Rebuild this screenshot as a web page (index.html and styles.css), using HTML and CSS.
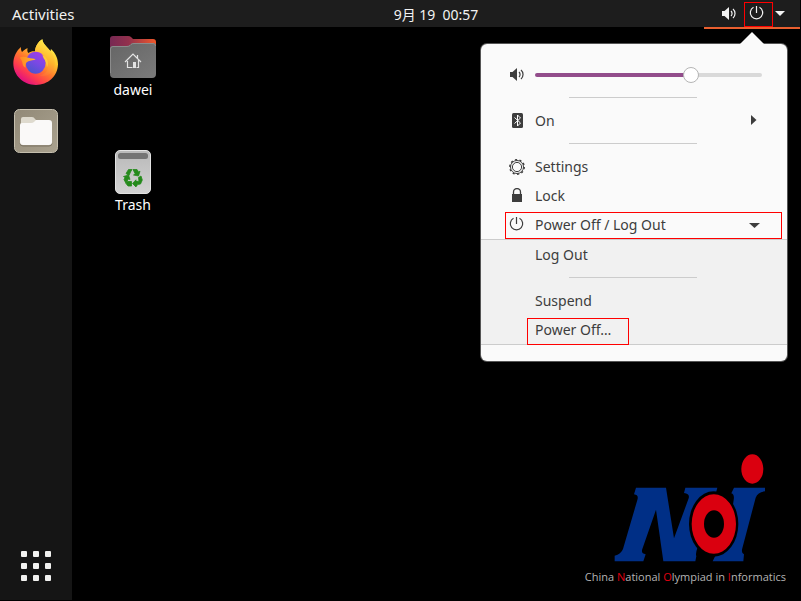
FILE: index.html
```html
<!DOCTYPE html>
<html lang="en">
<head>
<meta charset="utf-8">
<title>Desktop</title>
<link rel="stylesheet" href="styles.css">
</head>
<body>
<svg class="defs" aria-hidden="true">
  <symbol id="volume" viewBox="0 0 16 16">
    <path d="M1 5h2.500L8 1v13l-4.500-4H1z" fill="currentColor"/>
    <path d="M10 5a3.500 3.500 0 0 1 0 5M12 3a6 6 0 0 1 0 9" fill="none" stroke="currentColor" stroke-width="1.200"/>
  </symbol>
  <symbol id="power" viewBox="0 0 16 16">
    <path d="M7.500 0v7M4.500 1.300a6.200 6.200 0 1 0 6 0" fill="none" stroke="currentColor" stroke-width="1.200"/>
  </symbol>
</svg>
<header class="topbar">
  <button class="activities" type="button">Activities</button>
  <time class="clock">9月 19&nbsp; 00:57</time>
  <button class="status" type="button" aria-label="System menu">
    <svg class="icon"><use href="#volume"/></svg>
    <span class="status-power"><svg class="icon"><use href="#power"/></svg></span>
    <svg class="status-arrow" viewBox="0 0 10 5"><path d="M0 0h10L5 5z" fill="currentColor"/></svg>
  </button>
</header>
<main class="screen">
  <nav class="dock" aria-label="Dock">
    <button type="button" class="launcher" aria-label="Firefox">
      <svg class="firefox" viewBox="16 13 138 138">
        <defs>
          <linearGradient id="flame" x1=".85" y1=".1" x2=".25" y2=".95">
            <stop offset="0" stop-color="#fff44f"/><stop offset=".3" stop-color="#ffc42d"/><stop offset=".55" stop-color="#ff7a2c"/><stop offset=".78" stop-color="#ff3d4d"/><stop offset="1" stop-color="#e00f83"/>
          </linearGradient>
          <linearGradient id="tail" x1=".7" y1="0" x2=".4" y2="1">
            <stop offset="0" stop-color="#fff44f"/><stop offset=".55" stop-color="#ffb52d"/><stop offset="1" stop-color="#ff6a36"/>
          </linearGradient>
          <linearGradient id="globe" x1=".8" y1="0" x2=".3" y2="1">
            <stop offset="0" stop-color="#a83be6"/><stop offset=".5" stop-color="#7a48e4"/><stop offset="1" stop-color="#4a55cc"/>
          </linearGradient>
          <linearGradient id="fox" x1="0" y1="0" x2="1" y2="0">
            <stop offset="0" stop-color="#ff8a22"/><stop offset="1" stop-color="#ffb52e"/>
          </linearGradient>
        </defs>
        <path d="M40 37C39 44 41 48 43 52C49 47 53 43 60 41C58 48 59 52 62 55C69 50 75 49 82 50C83 34 92 21 104 14C105 26 116 36 128 50L130 43C145 57 151 73 151 89C150 126 120 151 85 151C46 151 17 122 17 86C17 67 27 47 40 37Z" fill="url(#flame)"/>
        <path d="M82 52C83 34 92 21 104 14C105 28 119 36 130 52C143 68 146 91 134 108C124 123 110 126 97 123C116 117 124 105 121 91C118 78 114 73 104 65C97 60 91 56 82 52Z" fill="url(#tail)"/>
        <ellipse cx="84" cy="84" rx="30" ry="33" fill="url(#globe)"/>
        <path d="M36 69C43 64 53 67 62 69C70 72 79 70 84 74C78 78 69 77 62 80C54 83 52 90 54 99C49 97 46 93 45 88C44 80 41 74 36 69Z" fill="url(#fox)"/>
        <path d="M104 62C119 68 125 84 118 98C117 89 114 79 108 71Z" fill="#ffc93a"/>
      </svg>
    </button>
    <button type="button" class="launcher" aria-label="Files">
      <svg class="files" viewBox="0 0 44 44">
        <defs><linearGradient id="tan" x1="0" y1="0" x2="1" y2="1"><stop offset="0" stop-color="#918977"/><stop offset="1" stop-color="#aaa28f"/></linearGradient></defs>
        <rect x=".5" y=".5" width="43" height="43" rx="5" fill="url(#tan)" stroke="#c5bfae"/>
        <path d="M7 35V10q0-2 2-2h9q2 0 3 2l2 2h12v10H7z" fill="#dedace"/>
        <path d="M6 34q0 3 3 3h26q3 0 3-3" fill="none" stroke="#7c7564"/>
        <path d="M6 16q0-2 2-2h9q2 0 3-1l2-2h13q3 0 3 3v19q0 3-3 3H9q-3 0-3-3z" fill="#faf9f8"/>
      </svg>
    </button>
    <button type="button" class="launcher apps" aria-label="Show applications">
      <svg class="apps-icon" viewBox="0 0 30 30" fill="#f2f2f0">
        <rect width="6" height="6" rx="1"/><rect x="12" width="6" height="6" rx="1"/><rect x="24" width="6" height="6" rx="1"/>
        <rect y="12" width="6" height="6" rx="1"/><rect x="12" y="12" width="6" height="6" rx="1"/><rect x="24" y="12" width="6" height="6" rx="1"/>
        <rect y="24" width="6" height="6" rx="1"/><rect x="12" y="24" width="6" height="6" rx="1"/><rect x="24" y="24" width="6" height="6" rx="1"/>
      </svg>
    </button>
  </nav>
  <section class="desktop" aria-label="Desktop">
    <div class="shortcuts">
      <a class="shortcut" href="#home">
        <svg viewBox="0 0 48 44">
          <defs>
            <linearGradient id="back"><stop offset="0" stop-color="#772953"/><stop offset=".4" stop-color="#92304d"/><stop offset="1" stop-color="#f0582a"/></linearGradient>
            <linearGradient id="front" x1="0" y1="0" x2="1" y2="1"><stop offset="0" stop-color="#656565"/><stop offset="1" stop-color="#7b7b7b"/></linearGradient>
          </defs>
          <path d="M1 20V4q0-3 3-3h15q2 0 3 1l2 2h20q3 0 3 3v13z" fill="url(#back)"/>
          <path d="M1 14q0-3 3-3h14q2 0 3-1l1-1q1-1 3-1h19q3 0 3 3v28q0 4-4 4H5q-4 0-4-4z" fill="url(#front)"/>
          <path d="M1.500 38V14q0-2.500 2.500-2.500h14q2 0 3-1l1-1q1-1 3-1h19q2.500 0 2.500 2.500" fill="none" stroke="#8b8b8b"/>
          <path d="M16 27l8-8 8 8M18.500 26v6.500h5M29.500 25v7.500h-2M28.500 20v3" fill="none" stroke="#e4e4e4" stroke-width="1.200"/>
          <path d="M24 27h3v6h-3z" fill="#e4e4e4"/>
        </svg>
        <span>dawei</span>
      </a>
      <a class="shortcut" href="#trash">
        <svg viewBox="0 0 48 44">
          <defs><linearGradient id="can" x1="0" y1="0" x2="0" y2="1"><stop offset="0" stop-color="#b9b9b9"/><stop offset="1" stop-color="#d2d2d2"/></linearGradient></defs>
          <rect x="6.500" y=".5" width="35" height="43" rx="4.500" fill="url(#can)" stroke="#e2e2e2"/>
          <rect x="9" y="3" width="30" height="6" rx="2.500" fill="#747474"/>
          <g fill="#258a1c" stroke="#258a1c" stroke-width=".8">
            <path d="M17 23.500L19.500 19.500H23L21.500 22L20 25.500Z"/>
            <path d="M24 19.500H28L29.500 22L31 21.200L29.500 26L24.500 25L26.300 24Z"/>
            <path d="M29.500 27.500L32 26L33.300 30L31.500 34L28.500 34.500L27.500 31.500L30 31.200Z"/>
            <path d="M23.500 33.500L27 29.800V31.500H28V36H27V37Z"/>
            <path d="M18.500 31.500H22.500V36H19L17 33.500Z"/>
            <path d="M14.500 26.500L19.500 25L21 29.500L19.300 29L17 33.200L15 29.700L16 27.500Z"/>
          </g>
        </svg>
        <span>Trash</span>
      </a>
    </div>
    <figure class="brand">
      <svg viewBox="27 27 591 324" role="img" aria-label="NOI">
        <g fill="#002f86">
          <path d="M168 128H258L282 280L326 160Q330 146 312 144L316 128H412L408 143Q400 144 397 155L352 310Q346 325 349 334L346 349H250L228 194L187 312Q182 326 197 328L190 349H104V332Q123 328 129 312L172 165Q177 150 162 148Z"/>
          <path d="M462 128H555V139Q534 141 527 158L487 310Q483 324 492 328L490 349H398L406 332L440 310L461 165Q464 148 454 145Z"/>
        </g>
        <ellipse cx="401" cy="237" rx="74" ry="98" fill="#000"/>
        <path d="M335 237a66.500 89 0 1 0 133 0a66.500 89 0 1 0-133 0zM372 237a30 41 0 1 1 60 0a30 41 0 1 1-60 0z" fill="#da000f" fill-rule="evenodd"/>
        <ellipse cx="517" cy="72" rx="33" ry="44" fill="#da000f"/>
      </svg>
      <figcaption>China <b>N</b>ational <b>O</b>lympiad in <b>I</b>nformatics</figcaption>
    </figure>
  </section>
</main>
<aside class="menu" aria-label="System menu">
  <div class="row">
    <svg class="icon"><use href="#volume"/></svg>
    <input class="slider" type="range" min="0" max="100" value="70" aria-label="Volume">
  </div>
  <hr>
  <button class="row" type="button">
    <svg class="icon" viewBox="0 0 16 16"><rect x="3" width="11" height="15" rx="1.500" fill="currentColor"/><path d="M5.500 4.500l6 5.500-3 3v-11l3 3-6 5.500" fill="none" stroke="#fff"/></svg>
    <span class="label">On</span>
    <svg class="icon" viewBox="0 0 16 16"><path d="M5 2v10L10.500 7z" fill="currentColor"/></svg>
  </button>
  <hr>
  <button class="row" type="button">
    <svg class="icon" viewBox="0 0 16 16" fill="none" stroke="currentColor"><circle cx="8" cy="8" r="4.600"/><circle cx="8" cy="8" r="6.500"/><circle cx="8" cy="8" r="7.300" stroke-dasharray="2.200 2.386" stroke-width="1.300"/></svg>
    <span class="label">Settings</span>
  </button>
  <button class="row" type="button">
    <svg class="icon" viewBox="0 0 16 16"><path d="M3 6h10v8H3z" fill="currentColor"/><path d="M4.500 7V4a3.500 3.500 0 0 1 7 0v3" fill="none" stroke="currentColor" stroke-width="1.300"/></svg>
    <span class="label">Lock</span>
  </button>
  <button class="row marked" type="button" aria-expanded="true">
    <svg class="icon"><use href="#power"/></svg>
    <span class="label">Power Off / Log Out</span>
    <svg class="icon" viewBox="0 0 16 16"><path d="M3 6h11l-5.500 5z" fill="currentColor"/></svg>
  </button>
  <div class="submenu">
    <button class="row" type="button"><span class="label">Log Out</span></button>
    <hr>
    <button class="row" type="button"><span class="label">Suspend</span></button>
    <button class="row" type="button"><span class="label marked-label">Power Off…</span></button>
  </div>
</aside>
</body>
</html>
```
FILE: styles.css
```css
* {
  box-sizing: border-box;
}

body {
  margin: 0;
  padding: 0 1px 1px 0;
  min-height: 100vh;
  display: flex;
  flex-direction: column;
  position: relative;
  background: #000;
  color: #f2f2f2;
  font: 14px/22px "Noto Sans", "Noto Sans CJK SC", sans-serif;
}

button {
  margin: 0;
  padding: 0;
  border: 0;
  background: none;
  color: inherit;
  font: inherit;
}

svg {
  display: block;
  flex: none;
}

.defs {
  position: absolute;
  width: 0;
  height: 0;
}

.icon {
  width: 16px;
  height: 16px;
}

.topbar {
  display: grid;
  grid-template-columns: 1fr auto 1fr;
  height: 27px;
  background: #1d1d1d;
}

.activities {
  justify-self: start;
  padding: 0 12px 2px;
  font-size: 15px;
}

.clock {
  margin-left: 72px;
  line-height: 29px;
}

.status {
  justify-self: end;
  display: flex;
  align-items: center;
  width: 96px;
  padding-left: 17px;
  border-bottom: 2px solid #e95f2f;
}

.status-power {
  display: flex;
  justify-content: center;
  align-items: center;
  width: 29px;
  height: 25px;
  margin: 2px 2px 0 7px;
  padding-right: 4px;
  padding-bottom: 2px;
  border: 1px solid #f00;
  position: relative;
}

.status-arrow {
  width: 10px;
  height: 5px;
}

.screen {
  flex: 1;
  display: flex;
}

.dock {
  width: 72px;
  padding: 12px 0 19px;
  display: flex;
  flex-direction: column;
  align-items: center;
  gap: 24px;
  background: #151515;
}

.firefox {
  width: 46px;
  height: 46px;
}

.files {
  width: 44px;
  height: 44px;
}

.apps {
  margin-top: auto;
}

.apps-icon {
  width: 30px;
  height: 30px;
}

.desktop {
  flex: 1;
  display: flex;
  justify-content: space-between;
  padding: 8px 14px 8px 13px;
}

.shortcuts {
  display: flex;
  flex-direction: column;
  gap: 49px;
  width: 96px;
}

.shortcut {
  display: flex;
  flex-direction: column;
  align-items: center;
  color: #fff;
  text-decoration: none;
}

.shortcut svg {
  width: 48px;
  height: 44px;
}

.brand {
  align-self: flex-end;
  display: flex;
  flex-direction: column;
  align-items: flex-end;
  margin: 0;
  color: #b4b4b4;
  font-family: "Open Sans", sans-serif;
  font-size: 11px;
  line-height: 30px;
  white-space: nowrap;
}

.brand svg {
  width: 197px;
  height: 108px;
}

.brand b {
  color: #e00010;
  font-weight: inherit;
}

.menu {
  position: absolute;
  top: 44px;
  right: 14px;
  width: 306px;
  padding: 16px 0;
  border-radius: 6px;
  background: #fafafa;
  color: #3d3d3d;
  box-shadow: 0 0 0 1px #555;
}

.menu::before {
  content: "";
  position: absolute;
  right: 23px;
  bottom: 100%;
  border: solid transparent;
  border-width: 0 12px 12px;
  border-bottom-color: #fafafa;
}

.row {
  display: flex;
  align-items: center;
  gap: 10px;
  width: 100%;
  height: 29px;
  padding: 0 25px 0 28px;
  text-align: left;
  position: relative;
}

.label {
  flex: 1;
}

.menu hr {
  width: 128px;
  height: 1px;
  margin: 8px 0 8px 88px;
  border: 0;
  background: #ccc;
}

.submenu {
  border: solid #ccc;
  border-width: 1px 0;
  background: #f1f1f1;
}

.submenu .row {
  padding-left: 54px;
}

.marked::after {
  content: "";
  position: absolute;
  inset: 2px 5px 0 24px;
  border: 1px solid #f00;
}

.marked-label {
  flex: none;
  position: relative;
}

.marked-label::after {
  content: "";
  position: absolute;
  inset: -1px -18px -4px -8px;
  border: 1px solid #f00;
}

.slider {
  flex: 1;
  min-width: 0;
  height: 16px;
  margin: 0;
  appearance: none;
  background: none;
}

.slider::-webkit-slider-runnable-track {
  height: 4px;
  border-radius: 2px;
  background: linear-gradient(90deg, #924d8b 69%, #d9d9d9 69%);
}

.slider::-webkit-slider-thumb {
  appearance: none;
  width: 16px;
  height: 16px;
  margin-top: -6px;
  border: 1px solid #b5b5b5;
  border-radius: 50%;
  background: #fff;
}
```
